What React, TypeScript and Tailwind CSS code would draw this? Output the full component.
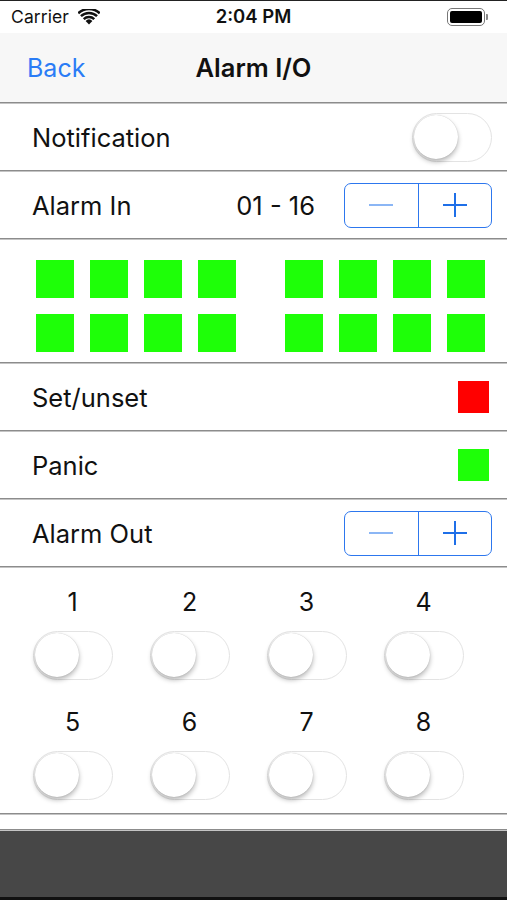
import React from "react";

const font = { fontFamily: "Inter, 'Noto Sans', 'Liberation Sans', sans-serif" };

function Toggle() {
  return (
    <div className="relative w-[80px] h-[49px] rounded-full border-[1.5px] border-[#e3e3e3] bg-white">
      <div className="absolute left-[1px] top-[1px] w-[44px] h-[44px] rounded-full bg-white shadow-[0_3px_5px_rgba(0,0,0,0.28),0_0_1px_rgba(0,0,0,0.25)]" />
    </div>
  );
}

function Stepper() {
  return (
    <div className="flex w-[148px] h-[45px] rounded-[7px] border-[1.5px] border-[#2d77ee]">
      <div className="flex-1 flex items-center justify-center border-r-[1.5px] border-[#2d77ee]">
        <div className="w-[24px] h-[2px] bg-[#8bb6f5]" />
      </div>
      <div className="flex-1 flex items-center justify-center relative">
        <div className="w-[24px] h-[2.5px] bg-[#1f6fe8]" />
        <div className="absolute w-[2.5px] h-[24px] bg-[#1f6fe8]" />
      </div>
    </div>
  );
}

function Divider() {
  return (
    <div className="h-[2px] w-full flex flex-col">
      <div className="h-[1px] bg-[#8c8c8c]" />
      <div className="h-[1px] bg-[#c4c4c4]" />
    </div>
  );
}

function Row({ children }: { children: React.ReactNode }) {
  return (
    <>
      <div className="h-[66px] flex items-center pl-[32px] pr-[15px]">{children}</div>
      <Divider />
    </>
  );
}

function Square({ color }: { color: string }) {
  return <div className={`w-[38px] h-[38px] ${color}`} />;
}

function Group() {
  return (
    <div className="grid grid-cols-4 gap-[16px]">
      {Array.from({ length: 8 }).map((_, i) => (
        <Square key={i} color="bg-[#1eff08]" />
      ))}
    </div>
  );
}

export default function App() {
  return (
    <div className="w-[507px] h-[900px] bg-white flex flex-col overflow-hidden text-[#111]" style={font}>
      <div className="h-[1px] bg-[#222]" />
      {/* status bar */}
      <div className="h-[32px] relative flex items-center px-[11px] bg-white">
        <span className="text-[17.5px] tracking-[0.1px]">Carrier</span>
        <svg className="ml-[9px]" width="22" height="16" viewBox="0 0 22 16">
          <path d="M11 15.5 L7.6 11.9 A5 5 0 0 1 14.4 11.9 Z" fill="#111" />
          <path d="M4.9 9.2 A8.8 8.8 0 0 1 17.1 9.2 L15.4 11 A6.4 6.4 0 0 0 6.6 11 Z" fill="#111" />
          <path d="M2.1 6.3 A12.8 12.8 0 0 1 19.9 6.3 L18.2 8.1 A10.4 10.4 0 0 0 3.8 8.1 Z" fill="#111" />
          <path d="M-0.6 3.4 A16.8 16.8 0 0 1 22.6 3.4 L20.9 5.2 A14.4 14.4 0 0 0 1.1 5.2 Z" fill="#111" />
        </svg>
        <span className="absolute left-0 right-0 text-center text-[18.5px] font-semibold pointer-events-none">2:04 PM</span>
        <div className="ml-auto flex items-center mr-[8px]">
          <div className="w-[38px] h-[18px] rounded-[5px] border-[1.5px] border-[#777] p-[2px]">
            <div className="w-full h-full rounded-[2px] bg-black" />
          </div>
          <div className="w-[2px] h-[6px] rounded-r-[1px] bg-[#888] ml-[1px]" />
        </div>
      </div>
      {/* nav bar */}
      <div className="h-[69px] bg-[#f7f7f7] relative flex items-center px-[27px]">
        <span className="text-[25px] text-[#2a7cf6] mt-[2px]">Back</span>
        <span className="absolute left-0 right-0 text-center text-[25.5px] font-semibold pointer-events-none mt-[2px]">Alarm I/O</span>
      </div>
      <Divider />
      <Row>
        <span className="text-[25.5px] mt-[2px]">Notification</span>
        <div className="ml-auto mr-[0px]">
          <Toggle />
        </div>
      </Row>
      <Row>
        <span className="text-[25.5px] mt-[2px]">Alarm In</span>
        <span className="ml-auto mr-[29px] text-[25.5px] mt-[2px]">01 - 16</span>
        <Stepper />
      </Row>
      <div className="h-[122px] flex items-start pt-[20px] pl-[36px] gap-[49px]">
        <Group />
        <Group />
      </div>
      <Divider />
      <Row>
        <span className="text-[25.5px] mt-[2px]">Set/unset</span>
        <div className="ml-auto mr-[3px] w-[31px] h-[32px] bg-[#ff0000]" />
      </Row>
      <Row>
        <span className="text-[25.5px] mt-[2px]">Panic</span>
        <div className="ml-auto mr-[3px] w-[31px] h-[32px] bg-[#1eff08]" />
      </Row>
      <Row>
        <span className="text-[25.5px] mt-[2px]">Alarm Out</span>
        <div className="ml-auto">
          <Stepper />
        </div>
      </Row>
      <div className="h-[245px] pl-[14px] pt-[20px]">
        <div className="grid grid-cols-[repeat(4,117px)] gap-y-[28px]">
          {[1, 2, 3, 4, 5, 6, 7, 8].map((n) => (
            <div key={n} className="flex flex-col items-center">
              <span className="text-[25px] leading-[28px] h-[28px]">{n}</span>
              <div className="mt-[15px]">
                <Toggle />
              </div>
            </div>
          ))}
        </div>
      </div>
      <Divider />
      <div className="h-[14px] bg-white" />
      <Divider />
      <div className="flex-1 bg-[#474747]" />
      <div className="h-[3px] bg-[#111]" />
    </div>
  );
}
